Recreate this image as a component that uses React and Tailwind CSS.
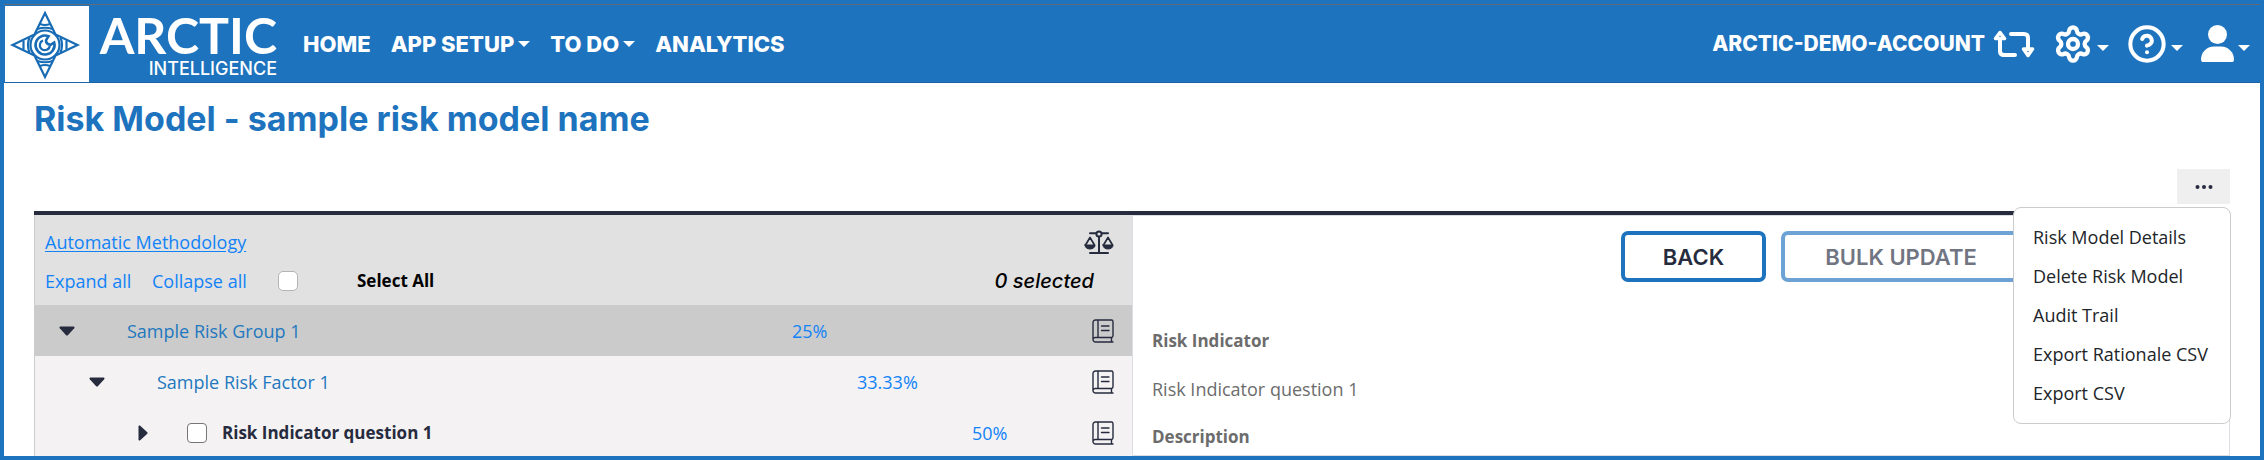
import React, { useState } from "react";
import { Settings, CircleQuestionMark } from "lucide-react";

/* ================= DATA ================= */
const menuItems = [
  "Risk Model Details",
  "Delete Risk Model",
  "Audit Trail",
  "Export Rationale CSV",
  "Export CSV",
];

/* ================= ICONS ================= */
const Caret = () => (
  <svg viewBox="0 0 12 6" className="w-3 h-[6px] shrink-0" fill="currentColor">
    <path d="M0 0h12L6 6z" />
  </svg>
);

const CaretDown = () => (
  <svg viewBox="0 0 16 10" className="w-4 h-[10px]" fill="currentColor">
    <path d="M1.6.5h12.8c1 0 1.4 1 .8 1.7L9.1 9a1.5 1.5 0 0 1-2.2 0L.8 2.2C.2 1.5.6.5 1.6.5z" />
  </svg>
);

const CaretRight = () => (
  <svg viewBox="0 0 10 16" className="w-[10px] h-4" fill="currentColor">
    <path d="M.5 1.6v12.8c0 1 1 1.4 1.7.8L9 9.1a1.5 1.5 0 0 0 0-2.2L2.2.8C1.5.2.5.6.5 1.6z" />
  </svg>
);

const SwitchIcon = () => (
  <svg
    viewBox="0 0 42 28"
    className="w-[42px] h-7"
    fill="none"
    stroke="currentColor"
    strokeWidth="4"
    strokeLinecap="round"
    strokeLinejoin="round"
  >
    <path d="M7 9v12q0 4 4 4h11M18 4h13q4 0 4 4v11" />
    <path d="M7 2.500 11.500 8.500h-9zM35 25.500l4.500-6.500h-9z" strokeWidth="3.500" />
  </svg>
);

const UserIcon = () => (
  <svg viewBox="0 0 33 37" className="w-[33px] h-[37px]" fill="currentColor">
    <circle cx="16.5" cy="9.5" r="9.5" />
    <path d="M13 21.5h7c7.500 0 13 6 13 13.200 0 1.400-1 2.300-2.300 2.300H2.300C1 37 0 36.100 0 34.700 0 27.500 5.500 21.500 13 21.500z" />
  </svg>
);

const ScalesIcon = () => (
  <svg
    viewBox="0 0 30 24"
    className="w-[30px] h-6"
    fill="none"
    stroke="currentColor"
    strokeWidth="2"
    strokeLinecap="round"
    strokeLinejoin="round"
  >
    <circle cx="15" cy="4" r="2.6" />
    <path d="M6 3.200h6M18 3.200h6M15 7v15.500M6 23h18" />
    <path d="M1.500 15 6 7.500l4.500 7.500M19.500 15 24 7.500l4.500 7.500" strokeWidth="1.7" />
    <path
      d="M1 15h10c0 2.600-2.200 4-5 4s-5-1.400-5-4zM19 15h10c0 2.600-2.200 4-5 4s-5-1.400-5-4z"
      fill="currentColor"
      strokeWidth="1"
    />
  </svg>
);

const BookIcon = () => (
  <svg
    viewBox="0 0 22 24"
    className="w-[22px] h-6"
    fill="none"
    stroke="currentColor"
    strokeWidth="1.4"
    strokeLinecap="round"
    strokeLinejoin="round"
  >
    <path d="M21 23H3.500A2.500 2.500 0 0 1 1 20.500V3.500A2.500 2.500 0 0 1 3.500 1h15.800c1 0 1.700.7 1.700 1.700v14.100c0 1-.7 1.700-1.700 1.700H3.500A2.300 2.300 0 0 0 1 20.700M6 1v17.500M19.500 18.500V23M9.500 7h7.500M9.500 11.500h7.500" />
  </svg>
);

const StarLogo = () => (
  <svg
    viewBox="0 0 84 76"
    className="w-[84px] h-[76px] bg-white"
    fill="none"
    stroke="#176cb5"
    strokeWidth="2.2"
  >
    <path d="M40 7 50.500 28.500 72.500 39 50.500 49.500 40 71 29.500 49.500 7.500 39 29.500 28.500z" />
    <path d="M35 18q5 2 10 0M32.500 23q7.500-2.500 15 0M35 60q5-2 10 0M32.500 55q7.500 2.500 15 0" />
    <path d="M18.500 34.500v9M24.500 31.500q-3 7.500 0 15M61.500 34.500v9M55.500 31.500q3 7.500 0 15" />
    <circle cx="40" cy="39" r="14.5" fill="#fff" />
    <path d="M43.500 30.200a9.500 9.500 0 1 0 5.700 6.300l-3.700 2.300q-4.500-.5-4.500-4.500z" strokeWidth="2.600" />
    <path d="M38 34.500a5 5 0 1 0 6.800 5.500" />
  </svg>
);

/* ================= NAV ================= */
const NavLink = ({ label, dropdown }) => (
  <a href="#" className="flex items-center gap-1 text-[22px] leading-7 font-extrabold">
    {label}
    {dropdown && <Caret />}
  </a>
);

const IconButton = ({ label, children }) => (
  <button type="button" aria-label={label} className="flex items-center gap-1">
    {children}
    <span className="pt-2">
      <Caret />
    </span>
  </button>
);

const Header = () => (
  <header className="flex shrink-0 items-center justify-between h-[79px] bg-[#1e73be] border-t border-t-[#5f6b78] border-b border-b-[#1a64a5] text-white font-['Inter',sans-serif]">
    <div className="flex items-center">
      <a href="#" className="flex items-center gap-2 pl-px" aria-label="Arctic Intelligence">
        <StarLogo />
        <span className="flex w-[180px] flex-col items-end">
          <span className="font-['Lato',sans-serif] text-[50px] leading-[50px] font-bold">
            ARCTIC
          </span>
          <span className="text-[18px] leading-[18px] font-medium">INTELLIGENCE</span>
        </span>
      </a>
      <nav className="ml-[26px] flex items-center gap-5">
        <NavLink label="HOME" />
        <NavLink label="APP SETUP" dropdown />
        <NavLink label="TO DO" dropdown />
        <NavLink label="ANALYTICS" />
      </nav>
    </div>

    <div className="flex items-center gap-[18px] pr-[10px]">
      <button type="button" className="flex items-center gap-2 text-[21px] leading-7 font-extrabold">
        ARCTIC-DEMO-ACCOUNT
        <SwitchIcon />
      </button>
      <IconButton label="Settings">
        <Settings size={40} strokeWidth={2.6} />
      </IconButton>
      <IconButton label="Help">
        <CircleQuestionMark size={40} strokeWidth={2.4} />
      </IconButton>
      <IconButton label="User">
        <UserIcon />
      </IconButton>
    </div>
  </header>
);

/* ================= TREE ================= */
const TreePanel = () => {
  const [allSelected, setAllSelected] = useState(false);
  const [selected, setSelected] = useState(false);

  return (
    <section className="w-1/2 border-l border-[#cccccc] bg-[#f4f2f3]">
      <div className="h-[90px] bg-[#e1e1e1] pt-[7px] pl-[10px]">
        <div className="flex h-[39px] items-center justify-between pr-[18px]">
          <a href="#" className="text-[#1283f7] underline underline-offset-2">
            Automatic Methodology
          </a>
          <button type="button" aria-label="Weighting" className="text-[#262b3e]">
            <ScalesIcon />
          </button>
        </div>
        <div className="flex h-[39px] items-center pr-[38px] text-[#1283f7]">
          <button type="button" className="w-[107px] text-left">Expand all</button>
          <button type="button" className="w-[126px] text-left">Collapse all</button>
          <input
            id="select-all"
            type="checkbox"
            checked={allSelected}
            onChange={(e) => setAllSelected(e.target.checked)}
            className="size-5 appearance-none rounded-[5px] border border-[#b5b5b5] bg-white checked:bg-[#1e73be]"
          />
          <label htmlFor="select-all" className="ml-[59px] text-[17px] font-bold text-black">
            Select All
          </label>
          <span className="ml-auto font-['Inter',sans-serif] text-[20px] font-medium italic text-black">
            0 selected
          </span>
        </div>
      </div>

      <div className="flex h-[51px] items-center bg-[#cbcbcb] pr-[18px] pl-6 text-[#262b3e]">
        <button type="button" aria-label="Collapse group" className="w-[68px]">
          <CaretDown />
        </button>
        <a href="#" className="flex-1 text-[#2278bf]">Sample Risk Group 1</a>
        <a href="#" className="w-[300px] text-[#1283f7]">25%</a>
        <BookIcon />
      </div>

      <div className="flex h-[51px] items-center pr-[18px] pl-[54px] text-[#262b3e]">
        <button type="button" aria-label="Collapse factor" className="w-[68px]">
          <CaretDown />
        </button>
        <a href="#" className="flex-1 text-[#2278bf]">Sample Risk Factor 1</a>
        <a href="#" className="w-[235px] text-[#1283f7]">33.33%</a>
        <BookIcon />
      </div>

      <div className="flex h-[51px] items-center pr-[18px] pl-[103px] text-[#262b3e]">
        <button type="button" aria-label="Expand indicator" className="w-[49px]">
          <CaretRight />
        </button>
        <input
          id="indicator-1"
          type="checkbox"
          checked={selected}
          onChange={(e) => setSelected(e.target.checked)}
          className="size-5 appearance-none rounded-[4px] border border-[#767676] bg-white checked:bg-[#1e73be]"
        />
        <label htmlFor="indicator-1" className="ml-[15px] flex-1 text-[17px] font-bold">
          Risk Indicator question 1
        </label>
        <a href="#" className="w-[120px] text-[#1283f7]">50%</a>
        <BookIcon />
      </div>
    </section>
  );
};

/* ================= DETAILS ================= */
const DetailPanel = () => (
  <section className="w-1/2 border border-[#dcdee4] pl-[19px] text-[#6c6c6c]">
    <div className="mt-[15px] mr-[208px] flex justify-end gap-[15px] font-['Inter',sans-serif] text-[22px] font-semibold text-[#262b3e]">
      <button type="button" className="h-[51px] w-[145px] rounded-[7px] border-4 border-[#1e73be]">
        BACK
      </button>
      <button
        type="button"
        disabled
        className="h-[51px] w-[240px] rounded-[7px] border-4 border-[#1e73be] opacity-65"
      >
        BULK UPDATE
      </button>
    </div>
    <dl className="mt-[35px]">
      <dt className="h-12 text-[17px] leading-[48px] font-bold">Risk Indicator</dt>
      <dd className="h-12 leading-[48px]">Risk Indicator question 1</dd>
      <dt className="h-12 text-[17px] leading-[48px] font-bold">Description</dt>
    </dl>
  </section>
);

/* ================= PAGE ================= */
const App = () => {
  const [menuOpen, setMenuOpen] = useState(true);

  return (
    <div className="flex h-screen flex-col overflow-hidden border-4 border-[#1e73be] bg-white font-['Open_Sans',sans-serif] text-[18px] leading-6">
      <Header />

      <main className="flex min-h-0 flex-1 flex-col px-[30px] pt-4">
        <h1 className="font-['Inter',sans-serif] text-[34px] leading-10 font-bold text-[#1e73be]">
          Risk Model - sample risk model name
        </h1>

        <div className="relative mt-[30px] flex justify-end">
          <button
            type="button"
            aria-label="More actions"
            aria-expanded={menuOpen}
            onClick={() => setMenuOpen(!menuOpen)}
            className="flex h-[35px] w-[53px] items-center justify-center bg-[#efefef] text-[#262b3e]"
          >
            <svg viewBox="0 0 18 4" className="w-[18px] h-1" fill="currentColor">
              <circle cx="2.5" cy="2" r="2" />
              <circle cx="9" cy="2" r="2" />
              <circle cx="15.5" cy="2" r="2" />
            </svg>
          </button>
          {menuOpen && (
            <ul className="absolute top-[38px] -right-px z-10 w-[218px] rounded-lg border border-[#cccccc] bg-white pt-[9px] pb-[11px] text-[#212529]">
              {menuItems.map((item) => (
                <li key={item}>
                  <button type="button" className="h-[39px] w-full pl-[19px] text-left whitespace-nowrap">
                    {item}
                  </button>
                </li>
              ))}
            </ul>
          )}
        </div>

        <div className="mt-[7px] flex min-h-0 flex-1 border-t-4 border-[#262b3e]">
          <TreePanel />
          <DetailPanel />
        </div>
      </main>
    </div>
  );
};

export default App;
